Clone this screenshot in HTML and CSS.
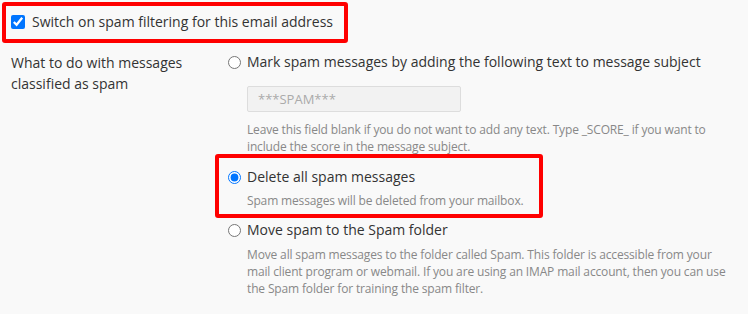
FILE: index.html
```html
<!DOCTYPE html>
<html lang="en">
<head>
    <meta charset="UTF-8">
    <title>Spam filter settings</title>
    <link rel="stylesheet" href="styles.css">
</head>
<body>
    <div class="page">
        <div class="mark mark-top">
            <label class="check">
                <input type="checkbox" checked>
                <span>Switch on spam filtering for this email address</span>
            </label>
        </div>

        <div class="field">
            <div class="field-label">What to do with messages classified as spam</div>
            <div class="field-options">
                <div class="option">
                    <label class="option-title">
                        <input type="radio" name="action">
                        <span>Mark spam messages by adding the following text to message subject</span>
                    </label>
                    <div class="option-body">
                        <input type="text" class="subject-text" placeholder="***SPAM***" disabled>
                        <p class="hint">Leave this field blank if you do not want to add any text. Type _SCORE_ if you want to include the score in the message subject.</p>
                    </div>
                </div>

                <div class="option mark mark-option">
                    <label class="option-title">
                        <input type="radio" name="action" checked>
                        <span>Delete all spam messages</span>
                    </label>
                    <div class="option-body">
                        <p class="hint">Spam messages will be deleted from your mailbox.</p>
                    </div>
                </div>

                <div class="option">
                    <label class="option-title">
                        <input type="radio" name="action">
                        <span>Move spam to the Spam folder</span>
                    </label>
                    <div class="option-body">
                        <p class="hint">Move all spam messages to the folder called Spam. This folder is accessible from your mail client program or webmail. If you are using an IMAP mail account, then you can use the Spam folder for training the spam filter.</p>
                    </div>
                </div>
            </div>
        </div>
    </div>
</body>
</html>
```

FILE: styles.css
```css
html, body {
    margin: 0;
    background-color: #f9f9f9;
}
body {
    font-family: "Open Sans", Arial, sans-serif;
    font-size: 14px;
    color: #333;
}
.page {
    padding: 2px 0 0 2px;
}
.mark {
    border: 4px solid #ff0000;
    border-radius: 3px;
}
.mark-top {
    display: inline-block;
    padding: 6px 11px 7px 5px;
}
.check {
    display: flex;
    align-items: center;
    gap: 7px;
    line-height: 20px;
}
.check input {
    margin: 0;
    width: 14px;
    height: 14px;
}
.field {
    display: grid;
    grid-template-columns: 204px 1fr;
    margin-top: 9px;
    padding-left: 9px;
}
.field-label {
    line-height: 21px;
    padding-right: 20px;
}
.option {
    padding: 0 0 0 13px;
}
.option-title {
    display: flex;
    align-items: center;
    gap: 6px;
    line-height: 20px;
}
.option-title input {
    margin: 0;
    width: 13px;
    height: 13px;
}
.option-body {
    padding-left: 19px;
    padding-right: 18px;
}
.subject-text {
    display: block;
    box-sizing: border-box;
    width: 214px;
    height: 26px;
    margin-top: 14px;
    padding: 0 10px;
    font-family: inherit;
    font-size: 13px;
    background-color: #f2f2f2;
    border: 1px solid #dddddd;
    border-radius: 2px;
}
.subject-text::placeholder {
    color: #aaa;
}
.hint {
    margin: 9px 0 0;
    font-size: 12px;
    letter-spacing: -0.15px;
    line-height: 17px;
    color: #888;
}
.option:first-child .hint {
    margin-bottom: 0;
}
.mark-option {
    display: inline-block;
    margin-top: -1px;
    padding: 9px 15px 5px 9px;
}
.mark-option .option-body {
    padding-right: 0;
}
.mark-option .hint {
    margin-top: 5px;
}
.mark-option + .option {
    margin-top: 2px;
}
.option:last-child .hint {
    margin-top: 6px;
}
```
